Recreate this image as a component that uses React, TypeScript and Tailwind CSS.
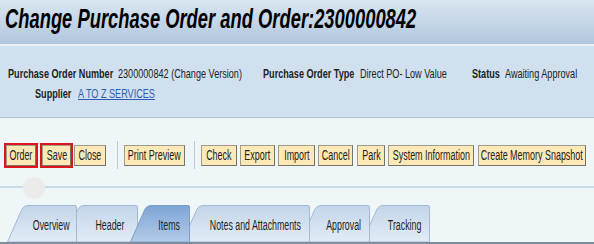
const buttons = [
  { label: 'Order', cls: 'w-[30px] ml-[6px] outline-2 outline-[#e0141c]' },
  { label: 'Save', cls: 'w-[29px] ml-[6px] outline-2 outline-[#e0141c]' },
  { label: 'Close', cls: 'w-[32px] ml-[3px]' },
]
const buttons2 = [
  { label: 'Check', cls: 'w-[36px]' },
  { label: 'Export', cls: 'w-[35px] ml-[3px]' },
  { label: 'Import', cls: 'w-[37px] ml-[3px]' },
  { label: 'Cancel', cls: 'w-[35px] ml-[3px]' },
  { label: 'Park', cls: 'w-[28px] ml-[4px]' },
  { label: 'System Information', cls: 'w-[86px] ml-[3px]' },
  { label: 'Create Memory Snapshot', cls: 'w-[108px] ml-[4px]' },
]

const tabs = [
  { label: 'Overview', w: 70, cls: 'w-[70px] ml-[7px] z-[6]' },
  { label: 'Header', w: 75, cls: 'w-[75px] -ml-[14px] z-[5]' },
  { label: 'Items', w: 60, cls: 'w-[60px] -ml-[8px] z-[9]', active: true },
  { label: 'Notes and Attachments', w: 128, cls: 'w-[128px] -ml-[8px] z-[3]' },
  { label: 'Approval', w: 70, cls: 'w-[70px] -ml-[10px] z-[2]' },
  { label: 'Tracking', w: 68, cls: 'w-[68px] -ml-[8px] z-[1]' },
]

// schmale schrift: Liberation Sans horizontal gestaucht
function Narrow({ w, className = '', children }: { w: string; className?: string; children: React.ReactNode }) {
  return (
    <span className={`inline-flex shrink-0 ${w}`}>
      <span className={`inline-block whitespace-nowrap origin-left scale-x-[0.7] ${className}`}>{children}</span>
    </span>
  )
}

function ToolButton({ label, cls }: { label: string; cls: string }) {
  return (
    <div
      className={`h-[21px] shrink-0 flex items-center justify-center bg-[#fde9b7] border border-[#a09c8c] border-r-[#77746a] border-b-[#77746a] text-[14px] leading-none text-[#222] ${cls}`}
    >
      <span className="inline-block whitespace-nowrap scale-x-[0.64]">{label}</span>
    </div>
  )
}

function Tab({ label, w, cls, active }: { label: string; w: number; cls: string; active?: boolean }) {
  return (
    <div className={`relative h-[37px] shrink-0 ${cls}`}>
      <svg className="absolute inset-0" width={w} height={37} viewBox={`0 0 ${w} 37`}>
        <path
          d={`M0.5,37 L15,4 Q17,0.5 21,0.5 L${w - 2},0.5 Q${w - 0.5},0.5 ${w - 0.5},2 L${w - 0.5},37 Z`}
          fill={active ? 'url(#tabOn)' : 'url(#tabOff)'}
          stroke={active ? '#7d9cc4' : '#a4b9d1'}
          strokeWidth={1}
        />
      </svg>
      <div className="relative h-full pl-[18px] pt-[3px] flex items-center justify-center text-[14px] leading-none text-[#1e1e1e]">
        <span className="inline-block whitespace-nowrap scale-x-[0.63]">{label}</span>
      </div>
    </div>
  )
}

export default function App() {
  return (
    <div className="relative w-[594px] h-[244px] overflow-hidden bg-[#eff6f7] font-['Liberation_Sans',Arial,sans-serif]">
      <svg width="0" height="0" className="absolute">
        <defs>
          <linearGradient id="tabOff" x1="0" y1="0" x2="0" y2="1">
            <stop offset="0" stopColor="#c3d5ea" />
            <stop offset="1" stopColor="#e2ecf6" />
          </linearGradient>
          <linearGradient id="tabOn" x1="0" y1="0" x2="0" y2="1">
            <stop offset="0" stopColor="#7ea5d5" />
            <stop offset="1" stopColor="#b3cce9" />
          </linearGradient>
        </defs>
      </svg>

      {/* titel */}
      <div className="h-[44px] pl-[5px] pb-[6px] flex items-center bg-gradient-to-b from-[#d9e6f2] to-[#b1c6dd] text-[27px] font-bold italic text-black leading-none">
        <span className="inline-block whitespace-nowrap origin-left scale-x-[0.68]">
          Change Purchase Order and Order:2300000842
        </span>
      </div>
      <div className="h-[2px] bg-[#eaf1f8]" />

      {/* kopfdaten */}
      <div className="h-[72px] bg-[#d1e0ef] border-b border-[#b3c3d3] pt-[21px] text-[13px] text-[#222] leading-none">
        <div className="flex pl-[8px]">
          <Narrow w="w-[110px]" className="font-bold">Purchase Order Number</Narrow>
          <Narrow w="w-[145px]">2300000842 (Change Version)</Narrow>
          <Narrow w="w-[97px]" className="font-bold">Purchase Order Type</Narrow>
          <Narrow w="w-[112px]">Direct PO- Low Value</Narrow>
          <Narrow w="w-[33px]" className="font-bold">Status</Narrow>
          <Narrow w="w-[80px]">Awaiting Approval</Narrow>
        </div>
        <div className="flex pl-[35px] mt-[7px]">
          <Narrow w="w-[43px]" className="font-bold">Supplier</Narrow>
          <Narrow w="w-[90px]" className="text-[#2b5fb3] underline">A TO Z SERVICES</Narrow>
        </div>
      </div>

      {/* toolbar */}
      <div className="flex items-center mt-[23px]">
        {buttons.map((b) => (
          <ToolButton key={b.label} {...b} />
        ))}
        <div className="w-px h-[28px] bg-[#b9cbd9] ml-[11px]" />
        <ToolButton label="Print Preview" cls="w-[61px] ml-[6px]" />
        <div className="w-px h-[28px] bg-[#b9cbd9] ml-[9px] mr-[6px]" />
        {buttons2.map((b) => (
          <ToolButton key={b.label} {...b} />
        ))}
      </div>

      <div className="h-[2px] bg-[#c9dbe4] mt-[17px]" />
      <div className="absolute left-[23px] top-[177px] w-[22px] h-[22px] rounded-full bg-[#ebebeb]" />

      {/* reiter */}
      <div className="absolute left-0 right-0 bottom-0 h-[40px] flex items-end border-b-2 border-[#7f8e9c]">
        {tabs.map((t) => (
          <Tab key={t.label} {...t} />
        ))}
      </div>
    </div>
  )
}
